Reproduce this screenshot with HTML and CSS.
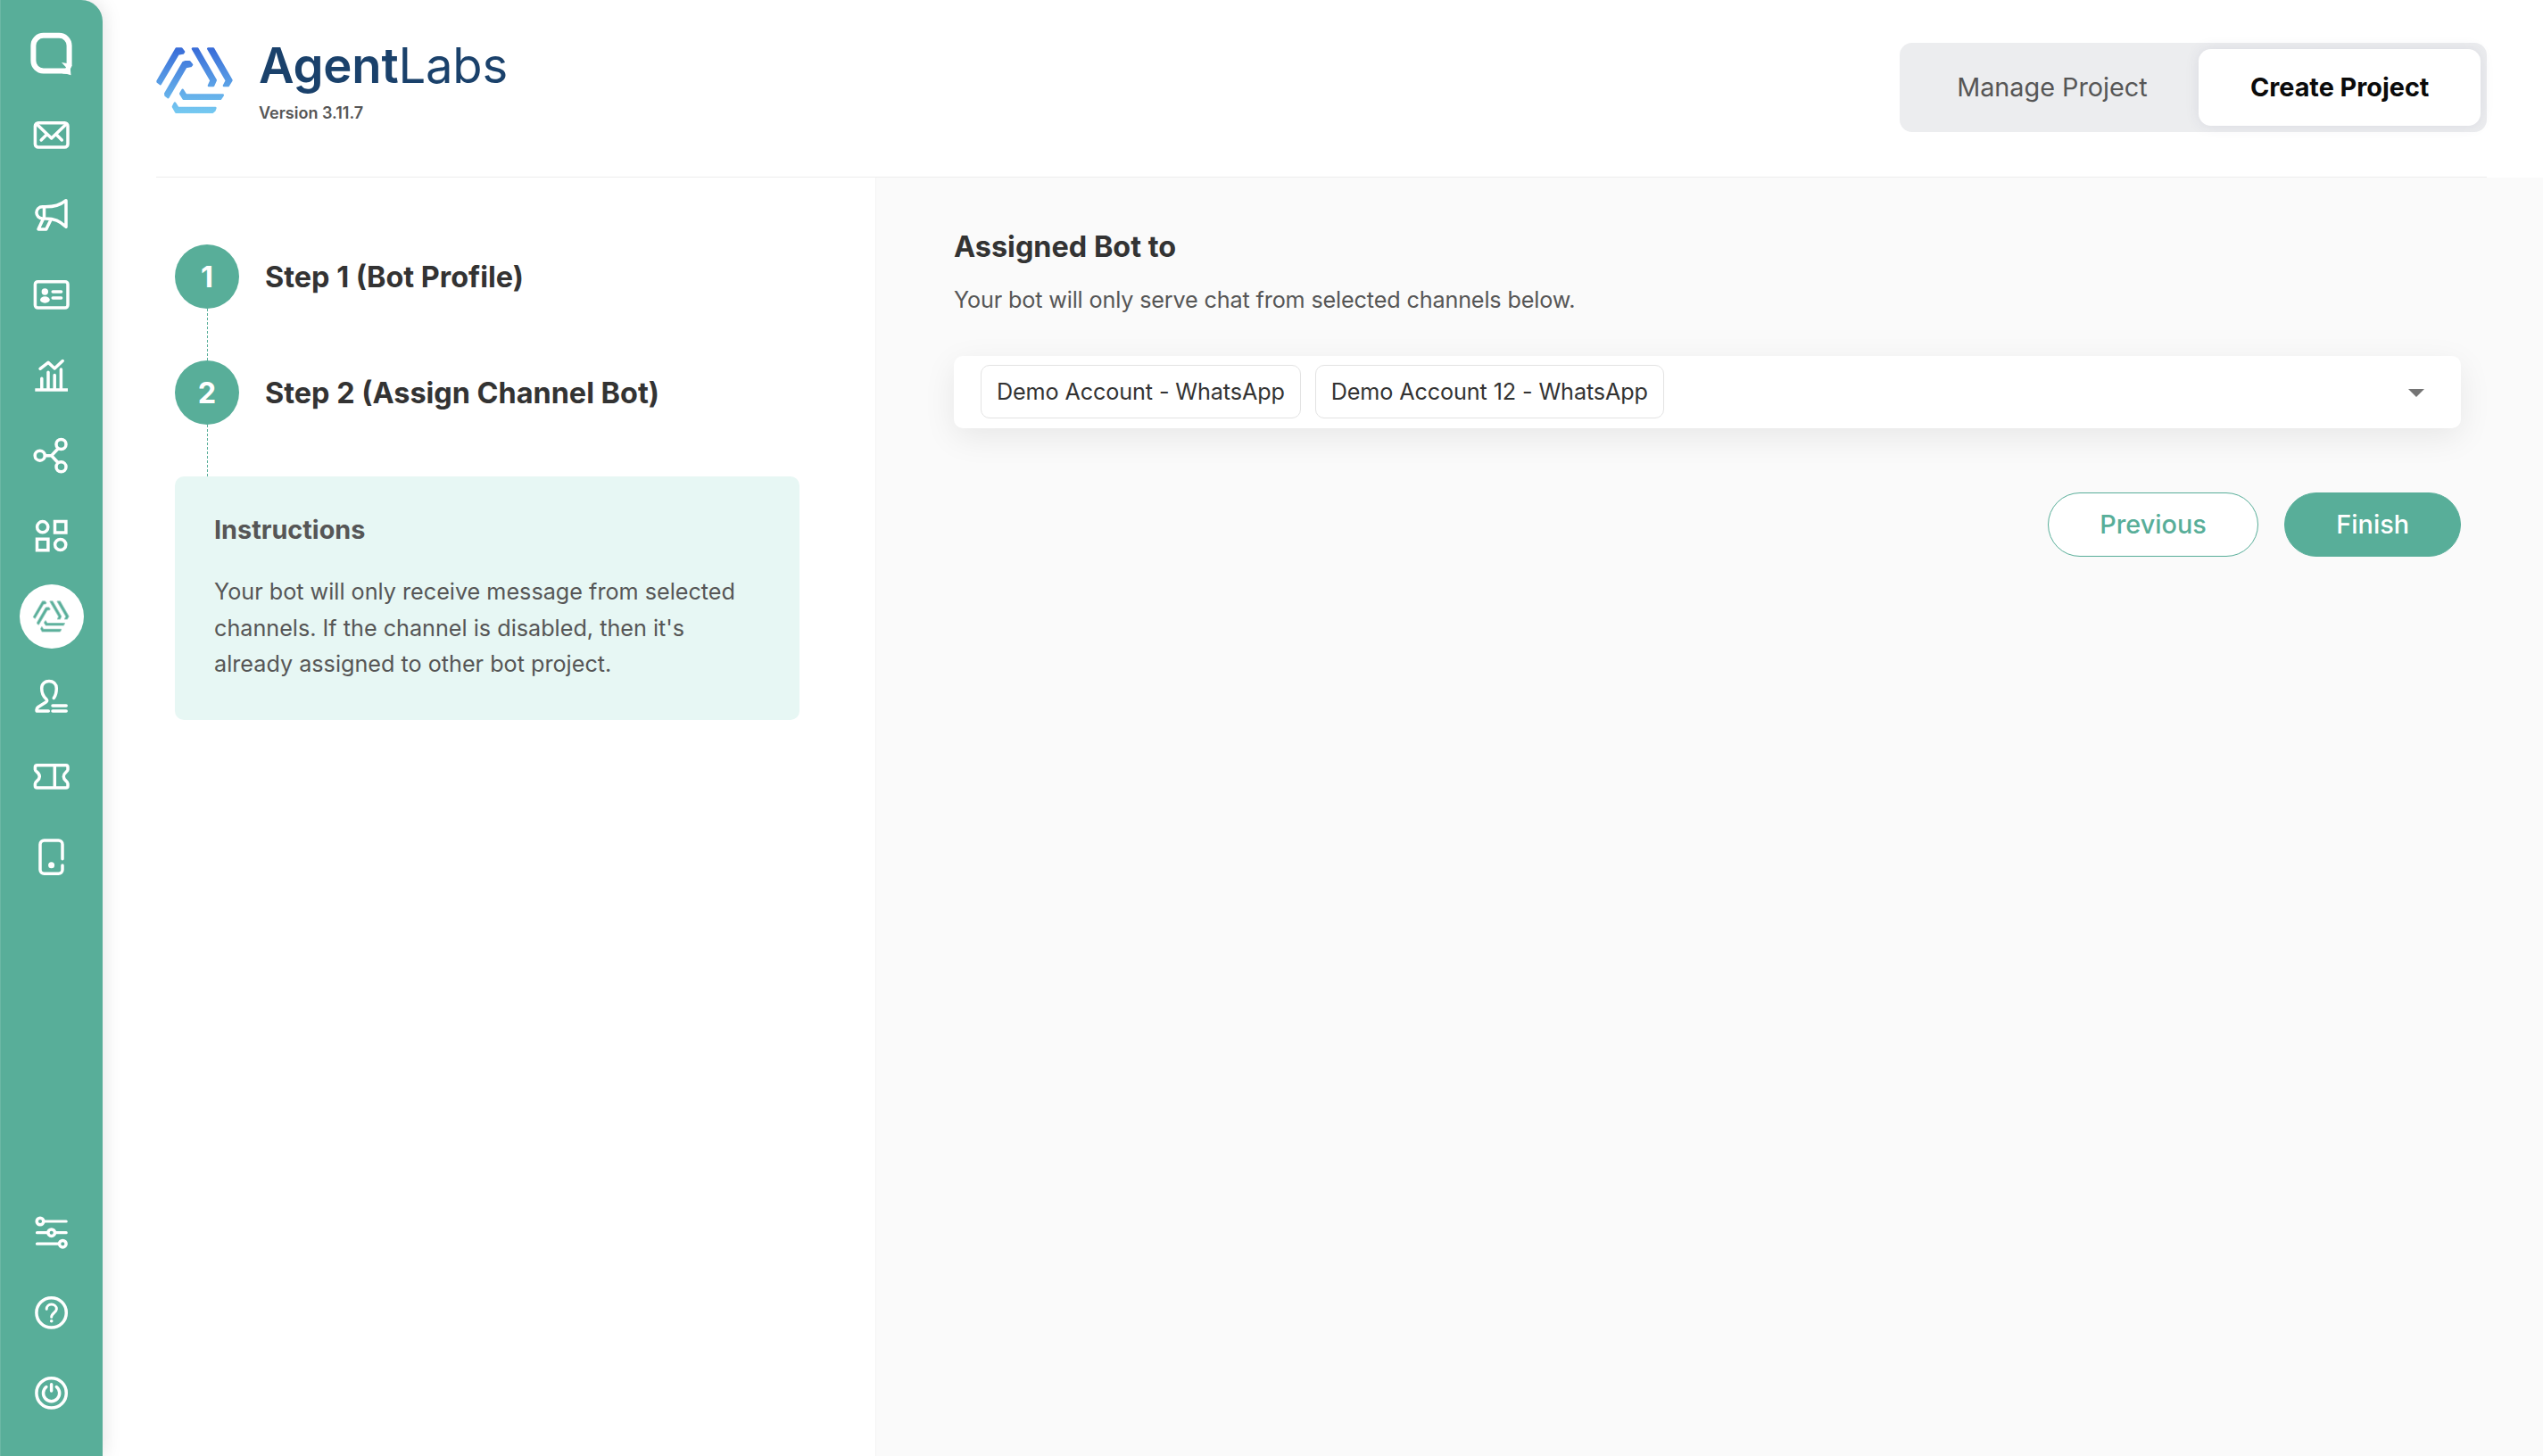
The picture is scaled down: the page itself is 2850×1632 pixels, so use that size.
FILE: index.html
```html
<!DOCTYPE html>
<html lang="en">
<head>
<meta charset="utf-8">
<title>AgentLabs</title>
<link rel="stylesheet" href="styles.css">
</head>
<body>
<div class="app">
  <nav class="sidebar">
    <a class="nav-item nav-logo"><svg class="icon" viewBox="0 0 49 48"><path stroke-width="6" d="M44.6 37V15A11.3 11.3 0 0 0 33.3 3.8H15.7A11.3 11.3 0 0 0 4.4 15v17A11.3 11.3 0 0 0 15.7 43.4H42"/><path class="solid" d="M36 34l6 1 5.5 2-1.600 4.500.600 6.800q-4-1.800-9.500-1.800l4-7z"/></svg></a>
    <a class="nav-item"><svg class="icon" viewBox="0 0 49 48"><rect x="6.400" y="10.700" width="36.600" height="27.400" rx="3.500"/><path d="M8 12l16.700 16L41.400 12M13.200 30l6-6M36.300 30l-6-6"/></svg></a>
    <a class="nav-item"><svg class="icon" viewBox="0 0.8 49 48"><path d="M41 8.500C34 14 28 15.500 18 15.500h-3.500a6.600 6.600 0 0 0 0 13.200H18C28 28.700 34 31.500 41 38zM16.500 15.500v13M15 30l-5 10.700h8.800L24 30"/></svg></a>
    <a class="nav-item"><svg class="icon" viewBox="0 0 49 48"><rect x="6.400" y="8.700" width="36.600" height="29.400" rx="3"/><circle class="solid" cx="17.300" cy="20" r="3.700"/><ellipse class="solid" cx="17.400" cy="29" rx="5.400" ry="3.700"/><path d="M26.200 20h9.400M26.200 27h9.400"/></svg></a>
    <a class="nav-item"><svg class="icon" viewBox="0 0 49 48"><path class="butt" d="M6.300 40H43"/><path d="M13.800 39V27.200M21 39V20.200M28.200 39V23.600M35.400 39V17M12 16.300L21 9.300l7.200 6.700L37.200 7.500"/></svg></a>
    <a class="nav-item"><svg class="icon" viewBox="0 0 49 48"><circle cx="11.700" cy="23.700" r="5.500"/><circle cx="35.500" cy="11" r="5.500"/><circle cx="35.500" cy="36.300" r="5.500"/><path d="M18 23.700h6.700l7-7.500M24.700 23.700l7 7.500"/></svg></a>
    <a class="nav-item"><svg class="icon" viewBox="0 0 49 48"><circle cx="14.700" cy="13.700" r="6.100"/><path class="butt" d="M28.500 7.500h12.400v12.400H28.500zM8.500 27.300h12.400v12.400H8.500z"/><circle cx="34.700" cy="33.500" r="6.100"/></svg></a>
    <a class="nav-item active"><svg class="bot-icon" viewBox="40 60 270 240"><use href="#bot"/></svg></a>
    <a class="nav-item"><svg class="icon" viewBox="0 0 49 48"><path d="M27.300 25.500C29.500 22.500 30.300 20 30.300 14.500 30.300 9.500 27 6.600 22 6.600s-8.300 2.900-8.300 7.900c0 6 1.300 8.500 4.800 11.700 1.600 1.600 1.600 2.800 0 3.800L9.800 35.500Q7.500 37.300 8.200 40H21.300M26 34h15.200M26 40h15.200"/></svg></a>
    <a class="nav-item"><svg class="icon" viewBox="0 0 49 48"><path d="M8.500 10.800H41q2 0 2 2.200v2.500c0 2.500-4.700 3.300-4.700 7.900s4.700 5.100 4.700 8.100V34q0 2-2 2H8.500q-2.100 0-2.100-2v-2.500c0-3 4.900-3.500 4.900-8.100s-4.900-5.400-4.900-7.900V13q0-2.200 2.100-2.200zM28.300 11v25"/></svg></a>
    <a class="nav-item"><svg class="icon" viewBox="0 0 49 48"><path d="M37 25.800V9.500a4.500 4.500 0 0 0-4.500-4.500h-16A4.500 4.500 0 0 0 12 9.500v28.300a4.500 4.500 0 0 0 4.500 4.500h16a4.500 4.500 0 0 0 4.500-4.500V33"/><circle class="solid" cx="24.600" cy="32.700" r="3.500"/></svg></a>
    <a class="nav-item push"><svg class="icon" viewBox="0 0 49 48"><path stroke-width="3.200" d="M17 12h24.200M8.500 24.700H20M29.500 24.700h11.700M8.500 37.200h24"/><circle cx="12" cy="12" r="3.800"/><circle cx="24.700" cy="24.700" r="3.800"/><circle cx="37.300" cy="37.200" r="3.800"/></svg></a>
    <a class="nav-item"><svg class="icon" viewBox="0 0 49 48"><circle cx="24.600" cy="24.400" r="16.700"/><path stroke-width="3" d="M19.200 20.300c0-3.200 2.400-5.200 5.500-5.200s5.700 2.100 5.700 5.200c0 3.400-5.700 5-5.700 9"/><circle class="solid" cx="24.700" cy="33.700" r="1.800"/></svg></a>
    <a class="nav-item"><svg class="icon" viewBox="0 0 49 48"><circle cx="24.600" cy="24.400" r="16.700"/><path d="M18.900 17.500a9.100 9.100 0 1 0 11.400 0M24.600 14.800v7.200"/></svg></a>
  </nav>
  <main class="main">
    <header class="header">
      <svg class="brand-logo" viewBox="40 60 270 240">
        <defs>
          <linearGradient id="sky" gradientUnits="userSpaceOnUse" x1="0" y1="70" x2="0" y2="291"><stop offset="0" stop-color="#386bd8"/><stop offset="1" stop-color="#76caf1"/></linearGradient>
          <g id="bot">
            <path d="M51 183L114 74H131L139 84 136 88.500 120 91 60 192 51 185z"/>
            <path d="M77 225L137 121 145 118H158L166 128 162 132 146 134.500 86 237 78 231z"/>
            <path d="M169 74H185L246 180 238 198H223L231 181z"/>
            <path d="M221 74H238L299 180 288 198H274L283 181z"/>
            <path d="M135 213L146 230H270L262 242H138L128 225z"/>
            <path d="M109 257L119 273H245L242 281 235 287H113L103 269z"/>
          </g>
        </defs>
        <use href="#bot"/>
      </svg>
      <div class="brand">
        <h1 class="brand-name"><b>Agent</b>Labs</h1>
        <p class="version">Version 3.11.7</p>
      </div>
      <div class="tabs">
        <button class="tab">Manage Project</button>
        <button class="tab selected">Create Project</button>
      </div>
    </header>
    <div class="content">
      <section class="steps">
        <div class="step"><span class="number">1</span><h2 class="title">Step 1 (Bot Profile)</h2></div>
        <div class="connector"></div>
        <div class="step"><span class="number">2</span><h2 class="title">Step 2 (Assign Channel Bot)</h2></div>
        <div class="connector"></div>
        <div class="instructions">
          <h3 class="instructions-title">Instructions</h3>
          <p class="instructions-text">Your bot will only receive message from selected channels. If the channel is disabled, then it's already assigned to other bot project.</p>
        </div>
      </section>
      <section class="panel">
        <h2 class="title">Assigned Bot to</h2>
        <p class="subtitle">Your bot will only serve chat from selected channels below.</p>
        <div class="select">
          <span class="chip">Demo Account - WhatsApp</span>
          <span class="chip">Demo Account 12 - WhatsApp</span>
          <svg class="caret" viewBox="0 0 18 9"><path d="M0 0h18L9 9z"/></svg>
        </div>
        <div class="actions">
          <button class="button outline">Previous</button>
          <button class="button primary">Finish</button>
        </div>
      </section>
    </div>
  </main>
</div>
</body>
</html>
```
FILE: styles.css
```css
* { box-sizing: border-box; margin: 0; padding: 0; }
body { font-family: Inter, sans-serif; color: #565656; background: #fff; }
button { font: inherit; border: 0; background: none; color: inherit; }

.app { display: flex; height: 1632px; overflow: hidden; }

.sidebar {
  width: 115px;
  flex: none;
  display: flex;
  flex-direction: column;
  align-items: center;
  gap: 18px;
  padding: 24px 0 35px;
  background: #58ae99;
  border-radius: 0 24px 0 0;
  box-shadow: inset 1px 0 #6bb8a5, 0 0 22px rgba(0, 0, 0, .13);
  z-index: 1;
}
.nav-item { width: 72px; height: 72px; display: flex; align-items: center; justify-content: center; flex: none; }
.nav-logo { margin-bottom: 1px; }
.nav-item.active { background: #fff; border-radius: 50%; }
.push { margin-top: auto; }
.icon { width: 49px; height: 48px; flex: none; fill: none; stroke: #fff; stroke-width: 3.5; stroke-linecap: round; stroke-linejoin: round; overflow: visible; }
.icon .solid { fill: #fff; stroke: none; }
.icon .butt { stroke-linecap: butt; stroke-linejoin: miter; }
.bot-icon { width: 42.500px; height: 37.800px; fill: #58ae99; stroke: #9dcfc3; stroke-width: 11; stroke-linejoin: round; paint-order: stroke; }

.main { flex: 1; display: flex; flex-direction: column; }
.header { height: 199px; flex: none; margin: 0 63px 0 60px; border-bottom: 1px solid #ededed; display: flex; align-items: flex-start; }
.brand-logo { width: 90px; height: 80px; margin: 50px 0 0 -1.700px; fill: url(#sky); stroke: url(#sky); stroke-width: 8; stroke-linejoin: round; }
.brand { margin: 43px 0 0 26.700px; }
.brand-name { font-size: 54.400px; line-height: 60px; font-weight: 400; letter-spacing: -.200px; color: #1a416b; }
.brand-name b { font-weight: 600; }
.version { font-size: 18px; line-height: 24px; font-weight: 600; margin-top: 12px; }

.tabs { display: flex; height: 100px; margin: 48px 0 0 auto; padding: 7px; background: #ecedef; border-radius: 14px; }
.tab { padding: 0 57.600px 2px; font-size: 28.800px; border-radius: 14px; }
.tab.selected { background: #fff; color: #0b0b0b; font-weight: 700; box-shadow: 0 0 16px rgba(60, 60, 110, .1); }

.content { flex: 1; display: flex; }
.steps { width: 867px; flex: none; padding: 75px 86px 0 81px; }
.step { display: flex; align-items: center; gap: 29px; }
.number { width: 72px; height: 72px; border-radius: 50%; background: #58ae99; color: #fff; font-size: 32.400px; font-weight: 700; display: flex; align-items: center; justify-content: center; }
.title { font-size: 32.400px; line-height: 41px; font-weight: 700; color: #333; }
.connector { width: 1px; height: 58px; margin-left: 36px; background: repeating-linear-gradient(#58ae99 0 3px, transparent 3px 5px); }
.instructions { height: 273px; padding: 40px 50px 0 44px; background: #e7f7f4; border-radius: 10px; }
.instructions-title { font-size: 28.800px; line-height: 40px; font-weight: 700; margin-bottom: 29px; }
.instructions-text { font-size: 25.200px; line-height: 40.500px; }

.panel { flex: 1; margin-left: -1px; padding: 57px 92px 0 88px; background: #fafafa; box-shadow: inset 1px 0 #f3f3f3; }
.subtitle { font-size: 25.200px; line-height: 40px; letter-spacing: -.150px; margin-top: 19px; }
.select { display: flex; align-items: center; gap: 16px; height: 81px; margin-top: 43px; padding: 0 41px 1px 30px; background: #fff; border-radius: 10px; box-shadow: 0 10px 36px rgba(0, 0, 0, .08); }
.chip { height: 60px; padding: 0 17px; border: 1px solid #e3e3e3; border-radius: 10px; font-size: 25.200px; line-height: 58px; letter-spacing: -.120px; color: #333; white-space: nowrap; }
.caret { width: 18px; height: 9px; margin: 3px 0 0 auto; fill: #757575; }
.actions { display: flex; justify-content: flex-end; gap: 29px; margin-top: 72px; }
.button { height: 72px; padding: 0 57.600px 2px; border: 1px solid #58ae99; border-radius: 36px; font-size: 28.800px; font-weight: 500; }
.outline { background: #fff; color: #58ae99; }
.primary { padding-inline: 57px; background: #58ae99; color: #fff; }
```
